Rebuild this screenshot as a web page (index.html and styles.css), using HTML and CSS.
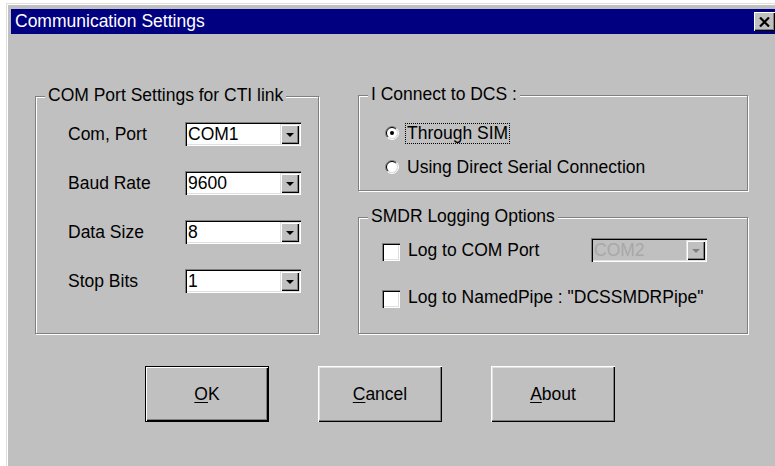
FILE: index.html
```html
<!DOCTYPE html>
<html>
<head>
<meta charset="utf-8">
<title>Communication Settings</title>
<link rel="stylesheet" href="styles.css">
</head>
<body>
<div class="window">
  <div class="titlebar">
    <span class="title">Communication Settings</span>
    <span class="close">
      <svg width="11" height="10" viewBox="0 0 11 10"><path d="M1 0.5 L10 9.5 M10 0.5 L1 9.5" stroke="#000" stroke-width="2.2" fill="none"/></svg>
    </span>
  </div>
  <div class="client">
    <div class="groups">
      <div class="group group-port">
        <span class="group-title">COM Port Settings for CTI link</span>
        <div class="fields">
          <div class="field"><span class="label">Com, Port</span><div class="combo"><span class="combo-text">COM1</span><span class="drop"><i class="arrow"></i></span></div></div>
          <div class="field"><span class="label">Baud Rate</span><div class="combo"><span class="combo-text">9600</span><span class="drop"><i class="arrow"></i></span></div></div>
          <div class="field"><span class="label">Data Size</span><div class="combo"><span class="combo-text">8</span><span class="drop"><i class="arrow"></i></span></div></div>
          <div class="field"><span class="label">Stop Bits</span><div class="combo"><span class="combo-text">1</span><span class="drop"><i class="arrow"></i></span></div></div>
        </div>
      </div>
      <div class="right-col">
        <div class="group group-connect">
          <span class="group-title">I Connect to DCS :</span>
          <div class="radios">
            <div class="option">
              <svg class="radio" width="14" height="14" viewBox="0 0 14 14">
                <circle cx="7" cy="7" r="5.5" fill="#fff"/>
                <path d="M2.4 11.6 A6.5 6.5 0 0 1 11.6 2.4" stroke="#808080" fill="none"/>
                <path d="M11.6 2.4 A6.5 6.5 0 0 1 2.4 11.6" stroke="#fff" fill="none"/>
                <path d="M3.1 10.9 A5.5 5.5 0 0 1 10.9 3.1" stroke="#000" fill="none"/>
                <path d="M10.9 3.1 A5.5 5.5 0 0 1 3.1 10.9" stroke="#dfdfdf" fill="none"/>
                <circle cx="7" cy="7" r="2" fill="#000"/>
              </svg>
              <span class="option-text focused">Through SIM</span>
            </div>
            <div class="option">
              <svg class="radio" width="14" height="14" viewBox="0 0 14 14">
                <circle cx="7" cy="7" r="5.5" fill="#fff"/>
                <path d="M2.4 11.6 A6.5 6.5 0 0 1 11.6 2.4" stroke="#808080" fill="none"/>
                <path d="M11.6 2.4 A6.5 6.5 0 0 1 2.4 11.6" stroke="#fff" fill="none"/>
                <path d="M3.1 10.9 A5.5 5.5 0 0 1 10.9 3.1" stroke="#000" fill="none"/>
                <path d="M10.9 3.1 A5.5 5.5 0 0 1 3.1 10.9" stroke="#dfdfdf" fill="none"/>
              </svg>
              <span class="option-text">Using Direct Serial Connection</span>
            </div>
          </div>
        </div>
        <div class="group group-smdr">
          <span class="group-title">SMDR Logging Options</span>
          <div class="checks">
            <div class="check-row">
              <span class="checkbox"></span>
              <span class="option-text check-label">Log to COM Port</span>
              <div class="combo disabled"><span class="combo-text">COM2</span><span class="drop"><i class="arrow"></i></span></div>
            </div>
            <div class="check-row second">
              <span class="checkbox"></span>
              <span class="option-text">Log to NamedPipe : "DCSSMDRPipe"</span>
            </div>
          </div>
        </div>
      </div>
    </div>
    <div class="buttons">
      <button class="btn default"><u>O</u>K</button>
      <button class="btn"><u>C</u>ancel</button>
      <button class="btn"><u>A</u>bout</button>
    </div>
  </div>
</div>
</body>
</html>
```
FILE: styles.css
```css
html, body {
  margin: 0;
  padding: 0;
  background: #fff;
  overflow: hidden;
  width: 775px;
  height: 466px;
}

body {
  font-family: "Liberation Sans", Arial, sans-serif;
  font-size: 17.5px;
  color: #000;
}

.window {
  box-sizing: border-box;
  margin: 3px 0 0 6px;
  width: 777px;
  height: 480px;
  padding: 5px 4px 0 4px;
  background: #c0c0c0;
  border-top: 1px solid #dfdfdf;
  border-left: 1px solid #dfdfdf;
  box-shadow: inset 1px 1px #fff;
}

.titlebar {
  height: 25px;
  display: flex;
  align-items: center;
  justify-content: space-between;
  background: #000080;
  color: #fff;
  padding-left: 4px;
}

.title {
  line-height: 25px;
  white-space: nowrap;
}

.close {
  width: 21px;
  height: 19px;
  margin-right: 4px;
  background: #c0c0c0;
  display: flex;
  align-items: center;
  justify-content: center;
  box-shadow: inset 1px 1px #fff, inset -1px -1px #000, inset -2px -2px #808080;
}

.client {
  padding-left: 24px;
}

.groups {
  display: flex;
  align-items: flex-start;
}

/* etched group frame */
.group {
  box-sizing: border-box;
  border: 1px solid #808080;
  box-shadow: inset 1px 1px #fff, 1px 1px #fff;
}

.group-title {
  display: block;
  width: fit-content;
  margin: -12px 0 0 9px;
  padding: 0 3px;
  line-height: 20px;
  background: #c0c0c0;
  white-space: nowrap;
}

.group-port {
  width: 284px;
  height: 238px;
  margin-top: 62px;
}

.fields {
  display: flex;
  flex-direction: column;
  gap: 25px;
  padding: 17px 0 0 32px;
}

.field {
  display: flex;
  align-items: center;
  height: 24px;
}

.label {
  width: 117px;
  white-space: nowrap;
}

.combo {
  box-sizing: border-box;
  width: 116px;
  height: 24px;
  padding: 2px;
  display: flex;
  align-items: center;
  background: #fff;
  box-shadow: inset 1px 1px #808080, inset 2px 2px #000, inset -1px -1px #fff, inset -2px -2px #dfdfdf;
}

.combo-text {
  flex: 1;
  padding-left: 1px;
  line-height: 20px;
  white-space: nowrap;
}

.drop {
  width: 19px;
  height: 20px;
  box-sizing: border-box;
  background: #c0c0c0;
  display: flex;
  align-items: center;
  justify-content: center;
  box-shadow: inset 1px 1px #dfdfdf, inset 2px 2px #fff, inset -1px -1px #000, inset -2px -2px #808080;
}

.arrow {
  width: 0;
  height: 0;
  border-left: 4px solid transparent;
  border-right: 4px solid transparent;
  border-top: 4px solid #000;
  margin-top: 1px;
}

.combo.disabled {
  background: #c0c0c0;
  color: #a8a8a8;
}

.combo.disabled .arrow {
  border-top-color: #808080;
}

.right-col {
  display: flex;
  flex-direction: column;
  margin-left: 39px;
  margin-top: 61px;
}

.group-connect {
  width: 390px;
  height: 96px;
}

.radios {
  display: flex;
  flex-direction: column;
  gap: 12px;
  padding: 18px 0 0 26px;
}

.option {
  display: flex;
  align-items: center;
  height: 22px;
}

.radio {
  flex: none;
  margin-right: 6px;
}

.option-text {
  border: 1px dotted transparent;
  padding: 0 1px;
  line-height: 19px;
  white-space: nowrap;
}

.option-text.focused {
  border-color: #000;
}

.group-smdr {
  width: 390px;
  height: 117px;
  margin-top: 26px;
}

.checks {
  display: flex;
  flex-direction: column;
  gap: 21px;
  padding: 11px 0 0 23px;
}

.check-row {
  display: flex;
  align-items: center;
  height: 26px;
}

.checkbox {
  flex: none;
  width: 18px;
  height: 18px;
  box-sizing: border-box;
  margin: 3px 6px 0 0;
  background: #fff;
  box-shadow: inset 1px 1px #808080, inset 2px 2px #000, inset -1px -1px #fff, inset -2px -2px #dfdfdf;
}

.check-label {
  width: 181px;
}

.buttons {
  display: flex;
  gap: 49px;
  margin-top: 32px;
  padding-left: 110px;
}

.btn {
  box-sizing: border-box;
  width: 124px;
  height: 56px;
  padding: 0;
  border: none;
  background: #c0c0c0;
  font: inherit;
  color: #000;
  box-shadow: inset 1px 1px #fff, inset -1px -1px #000, inset -2px -2px #808080, inset 2px 2px #dfdfdf;
}

.btn.default {
  border: 1px solid #000;
  box-shadow: inset 1px 1px #fff, inset -1px -1px #000, inset -2px -2px #808080;
}

.btn u {
  text-decoration: underline;
  text-underline-offset: 2px;
}
```
